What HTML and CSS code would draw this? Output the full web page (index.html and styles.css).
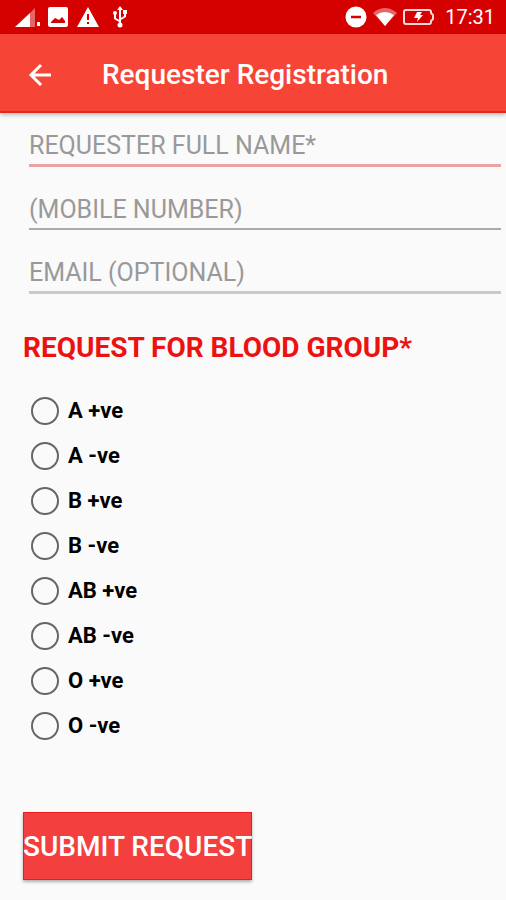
FILE: index.html
```html
<!DOCTYPE html>
<html lang="en">
<head>
<meta charset="utf-8">
<meta name="viewport" content="width=device-width, initial-scale=1">
<title>Requester Registration</title>
<link rel="stylesheet" href="styles.css">
</head>
<body>
<div class="status">
  <div class="status-left">
    <svg width="28" height="22" viewBox="0 0 28 22" fill="#fff" aria-hidden="true"><path d="M1 21 16 7v14z"/><path d="M16 7l5-5v19h-5z" opacity=".4"/><path d="M23 16h3v4h-3z"/></svg>
    <svg width="20" height="20" viewBox="0 0 20 20" fill="#fff" aria-hidden="true"><path fill-rule="evenodd" d="M2 0h16q2 0 2 2v16q0 2-2 2H2q-2 0-2-2V2q0-2 2-2zM3 16h14v-2l-3-4-3 3-4-2-4 4z"/></svg>
    <svg width="22" height="20" viewBox="0 0 22 20" fill="#fff" aria-hidden="true"><path fill-rule="evenodd" d="M11 0 22 20H0zM10 7v6h2V7zm0 8v2h2v-2z"/></svg>
    <svg width="16" height="22" viewBox="0 0 16 22" fill="none" stroke="#fff" stroke-width="2" aria-hidden="true"><path d="M8 19V3M8 15.500l-5-3V8M8 13.500l5-3V6"/><path d="M8 0l3 4H5zM11 4h4v4h-4z" fill="#fff" stroke="none"/><circle cx="3" cy="7" r="2" fill="#fff" stroke="none"/><circle cx="8" cy="19" r="2.500" fill="#fff" stroke="none"/></svg>
  </div>
  <div class="status-right">
    <svg width="22" height="22" viewBox="0 0 22 22" aria-hidden="true"><circle cx="11" cy="11" r="10.500" fill="#fff"/><path d="M6 11h10" stroke="#d50000" stroke-width="2.500"/></svg>
    <svg width="24" height="20" viewBox="0 0 24 20" fill="#fff" aria-hidden="true"><path d="M0 6Q12-4 24 6L12 19z" opacity=".4"/><path d="M3 8q9-6 18 0l-9 11z"/></svg>
    <svg width="32" height="18" viewBox="0 0 32 18" aria-hidden="true"><path d="M3 2h23q2 0 2 2v1l2 2v4l-2 2v1q0 2-2 2H3q-2 0-2-2V4q0-2 2-2z" fill="none" stroke="#fff" stroke-opacity=".85" stroke-width="2"/><path d="M14 4h5l-2 3h3l-6 7 1-4h-4z" fill="#fff"/></svg>
    <time>17:31</time>
  </div>
</div>
<header class="appbar">
  <button class="back" type="button" aria-label="Back"><svg width="24" height="24" viewBox="0 0 24 24" fill="none" stroke="#fff" stroke-width="3" aria-hidden="true"><path d="M23 12H3M13 2 3 12l10 10"/></svg></button>
  <h1>Requester Registration</h1>
</header>
<main>
<form>
  <div class="fields">
    <input class="field field-active" type="text" placeholder="REQUESTER FULL NAME*" aria-label="Requester full name">
    <input class="field field-mobile" type="tel" placeholder="(MOBILE NUMBER)" aria-label="Mobile number">
    <input class="field" type="email" placeholder="EMAIL (OPTIONAL)" aria-label="Email (optional)">
  </div>
  <fieldset>
    <legend>REQUEST FOR BLOOD GROUP*</legend>
    <label class="option"><input type="radio" name="group">A +ve</label>
    <label class="option"><input type="radio" name="group">A -ve</label>
    <label class="option"><input type="radio" name="group">B +ve</label>
    <label class="option"><input type="radio" name="group">B -ve</label>
    <label class="option"><input type="radio" name="group">AB +ve</label>
    <label class="option"><input type="radio" name="group">AB -ve</label>
    <label class="option"><input type="radio" name="group">O +ve</label>
    <label class="option"><input type="radio" name="group">O -ve</label>
  </fieldset>
  <button class="submit" type="button">SUBMIT REQUEST</button>
</form>
</main>
</body>
</html>
```
FILE: styles.css
```css
* {
  box-sizing: border-box;
}

body {
  margin: 0;
  background: #fafafa;
  color: #000;
  font-family: Roboto, "Liberation Sans", sans-serif;
}

svg {
  display: block;
}

.status {
  display: flex;
  align-items: center;
  justify-content: space-between;
  height: 34px;
  padding: 0 11px 0 14px;
  background: #d50000;
  color: #fff;
}

.status-left,
.status-right {
  display: flex;
  align-items: center;
}

.status-left {
  gap: 9px;
}

.status-left svg:first-child {
  margin-right: -3px;
}

.status-left svg:last-child {
  margin-left: 4px;
}

.status-right {
  gap: 6px;
}

.status-right time {
  margin-left: 4px;
  font-size: 20px;
  line-height: 34px;
}

.appbar {
  display: flex;
  align-items: center;
  height: 79px;
  padding: 4px 0 0 20px;
  border-bottom: 2px solid #e02a20;
  background: #f64437;
  box-shadow: 0 2px 4px rgba(0, 0, 0, 0.25);
  color: #fff;
}

.back {
  display: grid;
  place-items: center;
  width: 40px;
  height: 40px;
  padding: 0;
  border: 0;
  background: none;
}

h1 {
  margin: 0 0 0 42px;
  font-size: 28px;
  font-weight: 500;
  line-height: 40px;
}

main {
  padding: 14px 5px 20px 23px;
}

.fields {
  display: grid;
  gap: 24px;
  padding-left: 6px;
}

.field {
  width: 100%;
  height: 40px;
  padding: 0;
  border: 0;
  border-bottom: 3px solid #cacaca;
  border-radius: 0;
  outline: 0;
  background: none;
  font: 25px/32px Roboto, "Liberation Sans", sans-serif;
}

.field::placeholder {
  color: #999;
  opacity: 1;
}

.field-active {
  border-bottom-color: #eba3a3;
}

.field-mobile {
  height: 39px;
  border-bottom: 2px solid #aaa;
}

fieldset {
  min-width: 0;
  margin: 36px 0 0;
  padding: 0;
  border: 0;
}

legend {
  margin-bottom: 22px;
  padding: 0;
  color: #ec1212;
  font-size: 28px;
  font-weight: 700;
  line-height: 36px;
}

.option {
  display: flex;
  align-items: center;
  gap: 9px;
  height: 45px;
  padding-left: 8px;
  font-size: 22px;
  font-weight: 700;
}

.option input {
  appearance: none;
  width: 28px;
  height: 28px;
  margin: 0;
  border: 2px solid #666;
  border-radius: 50%;
}

.option input:checked {
  background: #d50000;
  box-shadow: inset 0 0 0 5px #fafafa;
}

.submit {
  display: block;
  height: 68px;
  margin-top: 64px;
  padding: 2px 0 0;
  border: 0;
  background: #f43f3f;
  box-shadow: inset 0 0 0 1px #ec1c1c, 0 2px 3px rgba(0, 0, 0, 0.3);
  color: #fff;
  font: 500 28px/36px Roboto, "Liberation Sans", sans-serif;
  white-space: nowrap;
}
```
